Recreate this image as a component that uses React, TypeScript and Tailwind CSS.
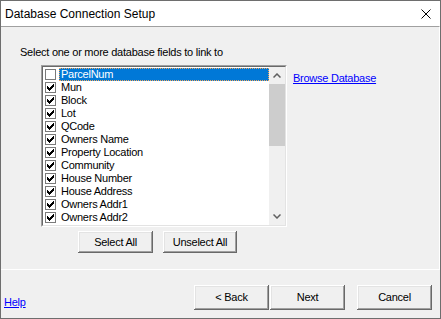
import React from 'react';

const FIELDS = [
  { name: 'ParcelNum', checked: false },
  { name: 'Mun', checked: true },
  { name: 'Block', checked: true },
  { name: 'Lot', checked: true },
  { name: 'QCode', checked: true },
  { name: 'Owners Name', checked: true },
  { name: 'Property Location', checked: true },
  { name: 'Community', checked: true },
  { name: 'House Number', checked: true },
  { name: 'House Address', checked: true },
  { name: 'Owners Addr1', checked: true },
  { name: 'Owners Addr2', checked: true },
];

const classicBtn =
  'bg-[#f0f0f0] text-black text-[11px] tracking-[-0.25px] flex items-center justify-center shadow-[inset_-1px_-1px_0_#696969,inset_1px_1px_0_#ffffff,inset_-2px_-2px_0_#a0a0a0,inset_2px_2px_0_#e3e3e3]';

const CheckMark = () => (
  <svg width="7" height="7" viewBox="0 0 7 7" shapeRendering="crispEdges">
    <path
      fill="#000"
      d="M6 0h1v1h-1z M5 1h2v1h-2z M0 2h1v1h-1z M4 2h3v1h-3z M0 3h2v1h-2z M3 3h3v1h-3z M0 4h5v1h-5z M1 5h3v1h-3z M2 6h1v1h-1z"
    />
  </svg>
);

const Chevron = ({ down }: { down?: boolean }) => (
  <svg width="8" height="5" viewBox="0 0 8 5">
    <path
      d={down ? 'M0.5 0.5 L4 4 L7.5 0.5' : 'M0.5 4.5 L4 1 L7.5 4.5'}
      fill="none"
      stroke="#606060"
      strokeWidth="1.5"
    />
  </svg>
);

const Box = ({ checked }: { checked: boolean }) => (
  <div className="ml-[2px] w-[11px] h-[11px] bg-white border border-[#7a7a7a] flex items-center justify-center shrink-0">
    {checked && <CheckMark />}
  </div>
);

const FieldRow = ({ name, checked, selected }: { name: string; checked: boolean; selected: boolean }) => (
  <div className="h-[13px] flex items-center shrink-0">
    <Box checked={checked} />
    <div
      className={
        selected
          ? 'ml-[3px] flex-1 h-[13px] pl-[1px] leading-[11px] bg-[#0078d7] text-white border border-dotted border-[#f2a65a]'
          : 'ml-[3px] flex-1 h-[13px] pl-[2px] leading-[13px] text-black'
      }
    >
      {name}
    </div>
  </div>
);

const App: React.FC = () => {
  return (
    <div
      className="w-[441px] h-[319px] bg-[#f0f0f0] border border-[#6e6e6e] flex flex-col overflow-hidden"
      style={{ fontFamily: '"Liberation Sans", Arial, sans-serif' }}
    >
      {/* Title bar */}
      <div className="h-[25px] bg-white flex items-center justify-between pl-[4px] pr-[9px] shrink-0">
        <span className="text-[12px] text-black">Database Connection Setup</span>
        <svg width="10" height="10" viewBox="0 0 10 10">
          <path d="M0.5 0.5 L9.5 9.5 M9.5 0.5 L0.5 9.5" stroke="#000" strokeWidth="1" />
        </svg>
      </div>

      {/* Page */}
      <div className="h-[244px] border-t border-t-[#a0a0a0] border-r border-r-white border-b border-b-white flex flex-col shrink-0 text-[11px] tracking-[-0.25px] text-black">
        <div className="mt-[19px] ml-[19px] leading-[13px]">Select one or more database fields to link to</div>

        <div className="mt-[6px] ml-[40px] flex items-start">
          {/* Checked list box */}
          <div className="w-[246px] h-[162px] border border-t-[#a0a0a0] border-l-[#a0a0a0] border-b-white border-r-white">
            <div className="w-full h-full border border-t-[#696969] border-l-[#696969] border-b-[#e3e3e3] border-r-[#e3e3e3] bg-white flex overflow-hidden">
              <div className="flex-1 flex flex-col overflow-hidden pt-[1px]">
                {FIELDS.map((f, i) => (
                  <FieldRow key={f.name} name={f.name} checked={f.checked} selected={i === 0} />
                ))}
                {/* next item, scrolled mostly out of view */}
                <div className="h-[13px] flex items-center shrink-0">
                  <Box checked />
                </div>
              </div>
              <div className="w-[16px] bg-[#f0f0f0] flex flex-col shrink-0">
                <div className="h-[17px] flex items-center justify-center">
                  <Chevron />
                </div>
                <div className="h-[62px] bg-[#cdcdcd]" />
                <div className="flex-1" />
                <div className="h-[17px] flex items-center justify-center">
                  <Chevron down />
                </div>
              </div>
            </div>
          </div>

          <a href="#" className="ml-[6px] mt-[7px] leading-[13px] text-[#0000ff] underline">
            Browse Database
          </a>
        </div>

        <div className="mt-[4px] ml-[77px] flex gap-[10px]">
          <button className={`${classicBtn} w-[75px] h-[22px]`}>Select All</button>
          <button className={`${classicBtn} w-[74px] h-[22px]`}>Unselect All</button>
        </div>
      </div>

      {/* Footer */}
      <div className="flex-1 flex items-start pl-[3px] pr-[8px] text-[11px] tracking-[-0.25px]">
        <a href="#" className="mt-[26px] leading-[13px] text-[#0000ff] underline">
          Help
        </a>
        <div className="ml-auto mt-[15px] flex">
          <button className={`${classicBtn} w-[75px] h-[25px]`}>&lt; Back</button>
          <button className={`${classicBtn} ml-[1px] w-[75px] h-[25px]`}>Next</button>
          <button className={`${classicBtn} ml-[12px] w-[75px] h-[25px]`}>Cancel</button>
        </div>
      </div>
    </div>
  );
};

export default App;
